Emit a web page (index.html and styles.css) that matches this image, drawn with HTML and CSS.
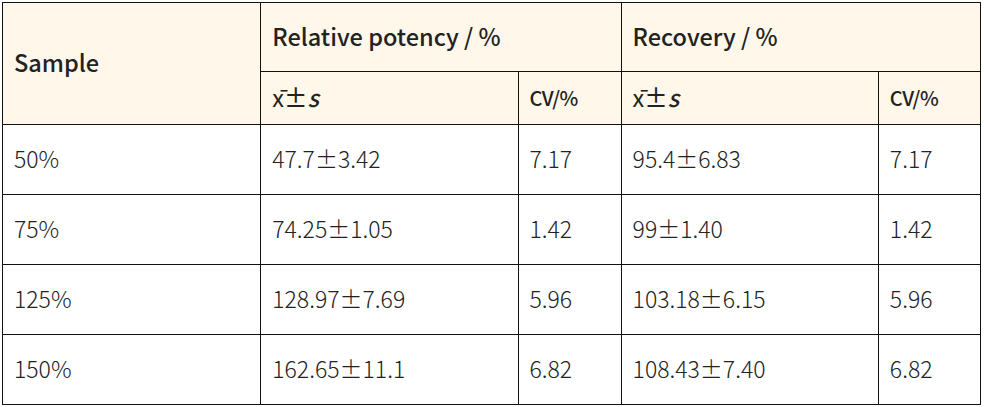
FILE: index.html
```html
<!DOCTYPE html>
<html>
<head>
<meta charset="utf-8">
<link rel="stylesheet" href="styles.css">
</head>
<body>
<table class="data">
  <colgroup>
    <col class="c-sample">
    <col class="c-mean">
    <col class="c-cv">
    <col class="c-mean">
    <col class="c-cv2">
  </colgroup>
  <thead>
    <tr class="h1">
      <th rowspan="2">Sample</th>
      <th colspan="2">Relative potency / %</th>
      <th colspan="2">Recovery / %</th>
    </tr>
    <tr class="h2">
      <th><span class="xbar">x̄</span>±<i>s</i></th>
      <th><span class="cv">CV/%</span></th>
      <th><span class="xbar">x̄</span>±<i>s</i></th>
      <th><span class="cv">CV/%</span></th>
    </tr>
  </thead>
  <tbody>
    <tr><td>50%</td><td>47.7±3.42</td><td>7.17</td><td>95.4±6.83</td><td>7.17</td></tr>
    <tr><td>75%</td><td>74.25±1.05</td><td>1.42</td><td>99±1.40</td><td>1.42</td></tr>
    <tr><td>125%</td><td>128.97±7.69</td><td>5.96</td><td>103.18±6.15</td><td>5.96</td></tr>
    <tr><td>150%</td><td>162.65±11.1</td><td>6.82</td><td>108.43±7.40</td><td>6.82</td></tr>
  </tbody>
</table>
</body>
</html>
```
FILE: styles.css
```css
html, body {
  margin: 0;
  padding: 0;
  background: #fff;
}
body {
  padding: 2px 0 0 2px;
  font-family: "Noto Sans CJK SC", "Noto Sans", sans-serif;
  color: #222;
}
.data {
  border-collapse: collapse;
  table-layout: fixed;
  width: 979px;
  font-size: 23px;
}
.c-sample { width: 258px; }
.c-mean { width: 257px; }
.c-cv { width: 103px; }
.c-cv2 { width: 102px; }
.data th, .data td {
  border: 1px solid #111;
  padding: 0 0 3px 11px;
  text-align: left;
  vertical-align: middle;
  white-space: nowrap;
  line-height: 26px;
}
.data th {
  background: #fef7ea;
  font-weight: 500;
  font-size: 23.5px;
}
.h1 { height: 69px; }
.h2 { height: 53px; }
.data tbody tr { height: 70px; }
.data td { font-weight: 300; }
.xbar { font-weight: 400; }
.data i { font-style: italic; }
.cv { font-size: 20px; letter-spacing: -0.5px; }
```
